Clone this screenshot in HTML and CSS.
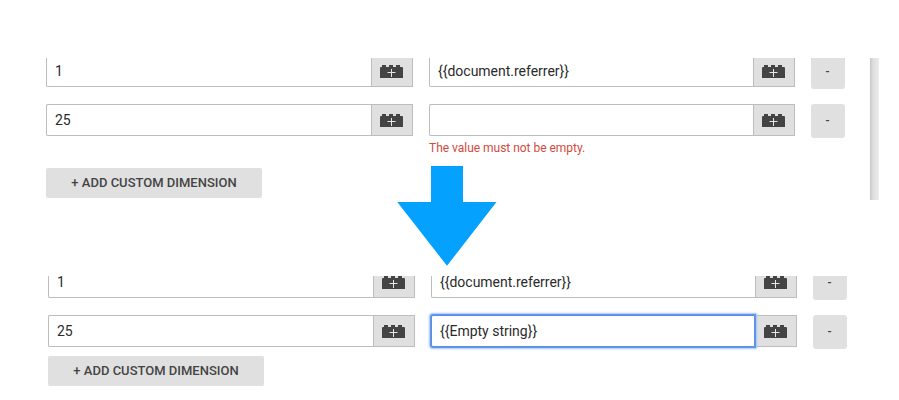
FILE: index.html
```
<!DOCTYPE html>
<html lang="en">
<head>
<meta charset="utf-8">
<title>Custom dimensions</title>
<link rel="stylesheet" href="styles.css">
</head>
<body>
<svg class="defs" aria-hidden="true">
  <symbol id="brick" viewBox="0 0 23 14">
    <path fill="#444" d="M0 3Q0 2 1 2H2V0H6V2H9V0H13V2H16V0H20V2H22Q23 2 23 3V13H0z"/>
    <path stroke="#e8e8e8" stroke-width="1" d="M11.5 4v8M7.5 7.5h8"/>
  </symbol>
</svg>
<section class="panel panel-before">
  <div class="rows">
    <div class="row">
      <div class="field"><div class="input">1</div><button class="pick"><svg><use href="#brick"/></svg></button></div>
      <div class="field"><div class="input">{{document.referrer}}</div><button class="pick"><svg><use href="#brick"/></svg></button></div>
      <button class="remove">-</button>
    </div>
    <div class="row">
      <div class="field"><div class="input">25</div><button class="pick"><svg><use href="#brick"/></svg></button></div>
      <div class="field"><div class="input"></div><button class="pick"><svg><use href="#brick"/></svg></button></div>
      <button class="remove">-</button>
    </div>
    <p class="error">The value must not be empty.</p>
    <button class="add">+ ADD CUSTOM DIMENSION</button>
  </div>
  <div class="scrollbar"></div>
</section>
<svg class="arrow" viewBox="0 0 100 100"><path fill="#04a1ff" d="M34 0H66V36H99.5L50 99.8.3 36H34z"/></svg>
<section class="panel panel-after">
  <div class="rows">
    <div class="row">
      <div class="field"><div class="input">1</div><button class="pick"><svg><use href="#brick"/></svg></button></div>
      <div class="field"><div class="input">{{document.referrer}}</div><button class="pick"><svg><use href="#brick"/></svg></button></div>
      <button class="remove">-</button>
    </div>
    <div class="row">
      <div class="field"><div class="input">25</div><button class="pick"><svg><use href="#brick"/></svg></button></div>
      <div class="field"><div class="input focused">{{Empty string}}</div><button class="pick"><svg><use href="#brick"/></svg></button></div>
      <button class="remove">-</button>
    </div>
    <button class="add">+ ADD CUSTOM DIMENSION</button>
  </div>
</section>
</body>
</html>
```
FILE: styles.css
```
* { box-sizing: border-box; }
body {
  margin: 0;
  width: 899px;
  height: 400px;
  padding-top: 58px;
  position: relative;
  overflow: hidden;
  background: #fff;
  color: #2b2b2b;
  font: 14px/20px Roboto, sans-serif;
}
.defs { display: none; }
button {
  font-family: inherit;
  border: 0;
  padding: 0;
  color: #444;
  background: #e0e0e0;
}
.panel { display: flex; overflow: hidden; }
.panel-before { height: 142px; padding-left: 46px; }
.panel-after { height: 124px; padding-left: 48px; margin-top: 76px; }
.rows { width: 799px; }
.panel-before .rows { margin-top: -3px; }
.panel-after .rows { margin-top: -10px; }
.row { display: flex; gap: 16px; height: 34px; margin-bottom: 15px; }
.field { display: flex; width: 367px; height: 32px; }
.field + .field { width: 366px; }
.input {
  flex: 1;
  height: 32px;
  padding: 5px 8px;
  border: 1px solid #bdbdbd;
  border-right: 0;
  border-radius: 2px 0 0 2px;
  background: #fff;
  letter-spacing: -0.01px;
}
.focused {
  border: 1px solid #5b8fe6;
  box-shadow: 0 0 0 1px #6395ea, 0 0 2px 2px #9fc5fa;
  position: relative;
}
.pick {
  display: flex;
  align-items: center;
  justify-content: center;
  width: 42px;
  height: 32px;
  border: 1px solid #bdbdbd;
}
.pick svg { width: 23px; height: 14px; margin: 2px 1px 0 0; }
.remove {
  width: 34px;
  height: 34px;
  border-radius: 3px;
  padding: 0 1px 1px 0;
  font-size: 12px;
  font-weight: 500;
}
.error {
  margin: -14px 0 0 383px;
  height: 29px;
  padding-top: 1px;
  font-size: 12px;
  line-height: 16px;
  letter-spacing: -0.02px;
  color: #d04a3e;
}
.add {
  display: block;
  width: 216px;
  height: 30px;
  padding: 0 0 2px 0;
  border-radius: 2px;
  font-size: 13px;
  font-weight: 500;
}
.panel-after .add { margin-top: -8px; }
.scrollbar {
  width: 9px;
  margin-left: 25px;
  background: linear-gradient(90deg, #c8c8c8, #dedede 35%, #ebebeb);
}
.arrow {
  position: absolute;
  left: 397px;
  top: 166px;
  width: 100px;
  height: 100px;
}
```
